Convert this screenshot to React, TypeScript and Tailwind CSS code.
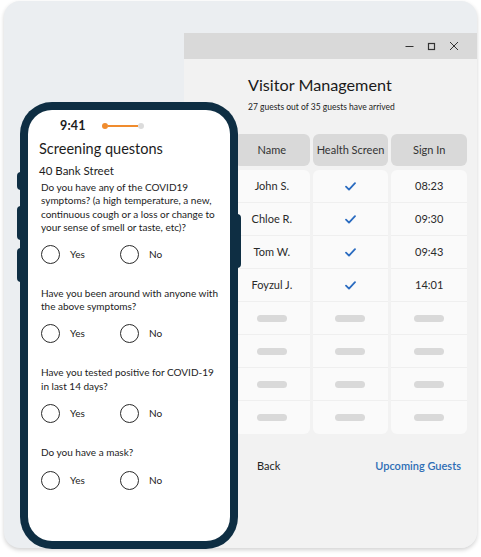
import React from "react";

const rows = [
  { name: "John S.", time: "08:23" },
  { name: "Chloe R.", time: "09:30" },
  { name: "Tom W.", time: "09:43" },
  { name: "Foyzul J.", time: "14:01" },
  null,
  null,
  null,
  null,
];

const questions = [
  "Do you have any of the COVID19 symptoms? (a high temperature, a new, continuous cough or a loss or change to your sense of smell or taste, etc)?",
  "Have you been around with anyone with the above symptoms?",
  "Have you tested positive for COVID-19 in last 14 days?",
  "Do you have a mask?",
];

const Check = () => (
  <svg width="11" height="9" viewBox="0 0 11 9" fill="none">
    <path d="M1 4.6l3 3 6-6.4" stroke="#2b6cc0" strokeWidth={1.8} strokeLinecap="round" strokeLinejoin="round" />
  </svg>
);

const Radio = ({ label }: { label: string }) => (
  <div className="flex items-center w-[79px]">
    <div className="w-[19px] h-[19px] rounded-full border-[1.5px] border-[#2a2a2a]" />
    <span className="ml-[10px] text-[10px] text-[#222]">{label}</span>
  </div>
);

const Phone = () => (
  <div className="absolute left-[20px] top-[102px] w-[218px] h-[447px] rounded-[32px] bg-[#0e2e43] p-[8px] z-10">
    {/* side buttons */}
    <div className="absolute -left-[3px] top-[70px] w-[4px] h-[18px] rounded-l bg-[#0e2e43]" />
    <div className="absolute -left-[3px] top-[104px] w-[4px] h-[34px] rounded-l bg-[#0e2e43]" />
    <div className="absolute -left-[3px] top-[146px] w-[4px] h-[34px] rounded-l bg-[#0e2e43]" />
    <div className="absolute -right-[3px] top-[112px] w-[4px] h-[54px] rounded-r bg-[#0e2e43]" />
    <div className="w-full h-full rounded-[24px] bg-white pl-[11px] pr-[8px] pt-[9px] font-['Lato',sans-serif] text-[#1c1c1c]">
      <div className="flex items-center h-[14px]">
        <span className="ml-[21px] text-[12.5px] font-bold tracking-[0.2px]">9:41</span>
        <div className="ml-[16px] flex items-center">
          <div className="w-[6px] h-[6px] rounded-full bg-[#f08c2e]" />
          <div className="w-[30px] h-[2px] bg-[#f08c2e]" />
          <div className="w-[6px] h-[6px] rounded-full bg-[#dcdcdc]" />
        </div>
      </div>
      <div className="mt-[7px] text-[14.5px] leading-[18px]">Screening questons</div>
      <div className="mt-[6px] text-[11.5px] leading-[14px]">40 Bank Street</div>
      {questions.map((q, i) => (
        <div key={i} className={i === 0 ? "mt-[3px]" : "mt-[23px]"}>
          <p className="pl-[2px] text-[10px] leading-[13.4px] text-[#1c1c1c]">{q}</p>
          <div className={`${i === 0 ? "mt-[10px]" : "mt-[11px]"} pl-[2px] flex items-center`}>
            <Radio label="Yes" />
            <Radio label="No" />
          </div>
        </div>
      ))}
    </div>
  </div>
);

const Window = () => (
  <div className="absolute left-[184px] top-[33px] w-[300px] h-[520px] bg-[#f2f2f2] font-['Lato',sans-serif]">
    <div className="h-[26px] bg-[#d9d9d9] flex items-center justify-end pr-[25px] gap-[13px] text-[#333]">
      <svg width="9" height="9" viewBox="0 0 9 9">
        <path d="M0.5 4.5h8" stroke="#333" strokeWidth={1} />
      </svg>
      <svg width="9" height="9" viewBox="0 0 9 9">
        <rect x="1.5" y="1.5" width="6" height="6" fill="none" stroke="#333" strokeWidth={1.2} />
      </svg>
      <svg width="10" height="10" viewBox="0 0 10 10">
        <path d="M1 1l8 8M9 1l-8 8" stroke="#333" strokeWidth={1} />
      </svg>
    </div>
    <div className="pl-[64px] pt-[15px]">
      <div className="text-[16.2px] leading-[22px] text-[#1a1a1a]">Visitor Management</div>
      <div className="mt-[6px] text-[8.5px] leading-[11px] text-[#222]">27 guests out of 35 guests have arrived</div>
    </div>
    <div className="ml-[50px] mt-[21px] w-[233px] grid grid-cols-3 gap-x-[3px]">
      {["Name", "Health Screen", "Sign In"].map((h) => (
        <div key={h} className="h-[32px] rounded-[6px] bg-[#d9d9d9] flex items-center justify-center text-[11px] text-[#333]">
          {h}
        </div>
      ))}
    </div>
    <div className="ml-[50px] mt-[4px] w-[233px] grid grid-cols-3 gap-x-[3px]">
      {[0, 1, 2].map((c) => (
        <div key={c} className="rounded-[6px] bg-[#fafafa] overflow-hidden">
          {rows.map((r, i) => (
            <div
              key={i}
              className={`h-[33px] flex items-center justify-center text-[11px] text-[#2a2a2a] ${i < 7 ? "border-b border-[#efefef]" : ""}`}
            >
              {r ? (
                c === 0 ? r.name : c === 1 ? <Check /> : r.time
              ) : (
                <div className="w-[30px] h-[7px] rounded-full bg-[#d9d9d9]" />
              )}
            </div>
          ))}
        </div>
      ))}
    </div>
    <div className="ml-[73px] mr-[23px] mt-[24px] flex items-center justify-between text-[11px]">
      <span className="text-[#222]">Back</span>
      <span className="text-[#2d6db5] font-semibold">Upcoming Guests</span>
    </div>
  </div>
);

export default function App() {
  return (
    <div className="w-[481px] h-[557px] bg-white relative">
      <div className="absolute left-[4px] top-[1px] w-[473px] h-[547px] rounded-[16px] bg-[#ebeef1] overflow-hidden shadow-[0_2px_4px_rgba(0,0,0,0.18)]">
        <div className="absolute -left-[4px] -top-[1px] w-[481px] h-[557px]">
          <Window />
        </div>
      </div>
      <Phone />
    </div>
  );
}
